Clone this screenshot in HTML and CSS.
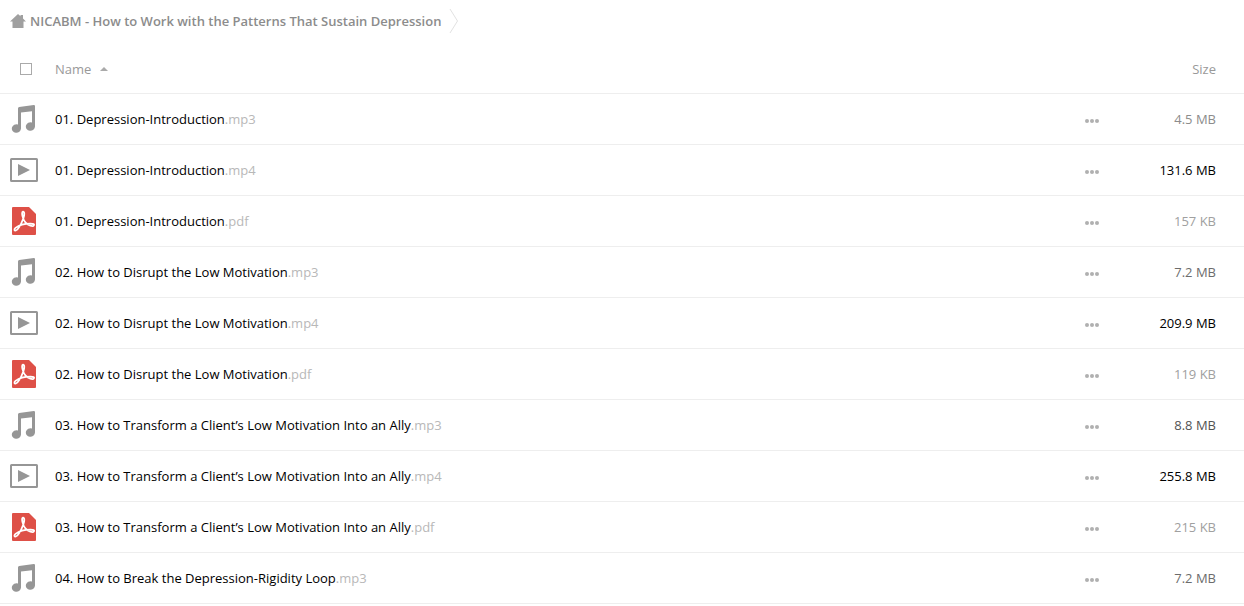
FILE: index.html
```html
<!DOCTYPE html>
<html lang="en">
<head>
    <meta charset="UTF-8">
    <meta name="viewport" content="width=device-width, initial-scale=1.0">
    <title>Files</title>
    <link rel="stylesheet" href="styles.css">
</head>
<body>
    <!-- Icons shared by the file rows -->
    <svg class="sprite" aria-hidden="true">
        <symbol id="icon-audio" viewBox="0 0 28 28">
            <path fill="#969696" d="M8 3.4Q8 2.2 9.200 2L23.800 .1Q25 0 25 1.200V21.500A4.600 4.300 -15 1 1 22 17.400V6.200L11 7.600V23.500A4.600 4.300 -15 1 1 8 19.400Z"/>
        </symbol>
        <symbol id="icon-video" viewBox="0 0 28 28">
            <rect x="1" y="3" width="26" height="22" rx=".5" fill="none" stroke="#969696" stroke-width="2"/>
            <path fill="#969696" d="M8 8l12 6-12 6z"/>
        </symbol>
        <symbol id="icon-pdf" viewBox="0 0 28 28">
            <path fill="#de5047" d="M3 0H19L26 7V27Q26 28 25 28H3Q2 28 2 27V1Q2 0 3 0Z"/>
            <path fill="none" stroke="#fff" stroke-width="1.800" stroke-linejoin="round" d="M12.900 4.700C14.700 4.500 14.600 8 13.300 11.500C11.700 15.800 8.500 22.500 5.800 23.500C4.200 24 3.900 22.200 5.500 20.900C8.500 18.600 15 16.600 20.500 16.600C23.600 16.600 24.500 17.400 23.900 18.400C22.900 20.100 18.200 18.500 15.600 15.600C12.700 12.500 11.100 5 12.900 4.700Z"/>
        </symbol>
        <symbol id="icon-more" viewBox="0 0 14 4">
            <g fill="#b0b0b0"><circle cx="2" cy="2" r="2"/><circle cx="7" cy="2" r="2"/><circle cx="12" cy="2" r="2"/></g>
        </symbol>
    </svg>

    <nav class="breadcrumb" aria-label="Breadcrumb">
        <a class="crumb" href="#">
            <svg class="home" viewBox="0 0 16 14" aria-hidden="true"><path fill="#a0a0a0" d="M8 0L10.500 2.300V1H13V4.500L16 7.500H13.500V14H2.500V7.500H0Z"/></svg>
            <span>NICABM - How to Work with the Patterns That Sustain Depression</span>
        </a>
        <svg class="separator" viewBox="0 0 10 26" aria-hidden="true"><path fill="none" stroke="#e2e2e2" d="M1 1L8.500 13L1 25"/></svg>
    </nav>

    <table class="files">
        <thead>
            <tr>
                <th class="select"><input type="checkbox" class="select-all" aria-label="Select all"></th>
                <th class="name"><button type="button" class="sort">Name<span class="arrow"></span></button></th>
                <th class="actions"></th>
                <th class="size"><button type="button" class="sort">Size</button></th>
            </tr>
        </thead>
        <tbody id="file-list"></tbody>
    </table>

    <script src="files.js"></script>
</body>
</html>
```
FILE: styles.css
```css
body {
    margin: 0;
    background-color: #fff;
    color: #000;
    font-family: "Open Sans", sans-serif;
    font-size: 13px;
    line-height: 18px;
}
a {
    color: inherit;
    text-decoration: none;
}
button {
    padding: 0;
    border: 0;
    background: none;
    color: inherit;
    font: inherit;
    cursor: pointer;
}
svg {
    display: block;
}
.sprite {
    display: none;
}
.breadcrumb {
    display: flex;
    align-items: center;
    gap: 8px;
    height: 42px;
    padding-left: 10px;
}
.crumb {
    display: flex;
    align-items: center;
    gap: 4px;
    color: #8c8c8c;
    font-weight: 600;
}
.home {
    width: 16px;
    height: 14px;
}
.separator {
    width: 10px;
    height: 26px;
}
.files {
    width: 100%;
    table-layout: fixed;
    border-spacing: 0;
}
.files th,
.files td {
    height: 50px;
    padding: 0;
    border-bottom: 1px solid #eee;
    font-weight: 400;
    text-align: left;
    vertical-align: middle;
}
.files th {
    height: 49px;
    padding-top: 2px;
    color: #999;
}
.files .select {
    width: 55px;
}
.files .actions {
    width: 59px;
}
.files .size {
    width: 72px;
    padding-right: 28px;
    text-align: right;
}
.select-all {
    display: block;
    width: 12px;
    height: 12px;
    margin: 0 0 0 20px;
    border: 1px solid #aaa;
    background-color: #fff;
    appearance: none;
}
.select-all:checked {
    background-color: #aaa;
}
.sort {
    display: inline-flex;
    align-items: center;
}
.arrow {
    margin-left: 9px;
    border: 4px solid transparent;
    border-top: 0;
    border-bottom-color: #aaa;
}
.file-icon {
    width: 28px;
    height: 28px;
    margin-left: 10px;
}
.extension {
    color: #b8b8b8;
}
.more {
    display: block;
    padding-top: 4px;
}
.more svg {
    width: 14px;
    height: 4px;
}
```
FILE: files.js
```js
const files = [
    ['audio', '01. Depression-Introduction', '.mp3', 4.5, 'MB'],
    ['video', '01. Depression-Introduction', '.mp4', 131.6, 'MB'],
    ['pdf', '01. Depression-Introduction', '.pdf', 157, 'KB'],
    ['audio', '02. How to Disrupt the Low Motivation', '.mp3', 7.2, 'MB'],
    ['video', '02. How to Disrupt the Low Motivation', '.mp4', 209.9, 'MB'],
    ['pdf', '02. How to Disrupt the Low Motivation', '.pdf', 119, 'KB'],
    ['audio', '03. How to Transform a Client’s Low Motivation Into an Ally', '.mp3', 8.8, 'MB'],
    ['video', '03. How to Transform a Client’s Low Motivation Into an Ally', '.mp4', 255.8, 'MB'],
    ['pdf', '03. How to Transform a Client’s Low Motivation Into an Ally', '.pdf', 215, 'KB'],
    ['audio', '04. How to Break the Depression-Rigidity Loop', '.mp3', 7.2, 'MB']
];

// Larger files get darker text
function sizeColor(size, unit) {
    const megabytes = unit === 'KB' ? size / 1024 : size;
    const level = Math.max(0, Math.round(160 - megabytes * megabytes));
    return `rgb(${level}, ${level}, ${level})`;
}

document.getElementById('file-list').innerHTML = files.map(([type, name, extension, size, unit]) => `
    <tr>
        <td class="select"><svg class="file-icon" aria-hidden="true"><use href="#icon-${type}"/></svg></td>
        <td class="name"><a href="#">${name}<span class="extension">${extension}</span></a></td>
        <td class="actions"><button type="button" class="more" aria-label="More actions"><svg><use href="#icon-more"/></svg></button></td>
        <td class="size" style="color: ${sizeColor(size, unit)}">${size} ${unit}</td>
    </tr>`).join('');
```
